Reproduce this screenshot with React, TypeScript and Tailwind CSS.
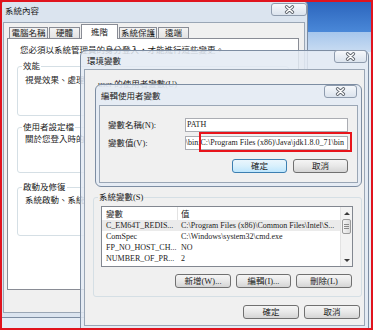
import React from "react";

const FONT = "font-['Liberation_Serif','Noto_Sans_CJK_TC',serif]";
const BTN =
  "flex items-center justify-center rounded-[3px] border border-[#707070] bg-linear-to-b from-[#f5f5f5] via-[#e8e8e8] to-[#d5d5d5] text-[#1b1b1b]";

function CloseBtn({ className = "" }: { className?: string }) {
  return (
    <div
      className={`flex items-center justify-center rounded-[3px] border border-[#8f9cae] bg-linear-to-b from-[#f6f8fb] to-[#dbe3ed] ${className}`}
    >
      <svg width="11" height="9" viewBox="0 0 11 9">
        <path d="M2.5 1.8 L8.5 7.2 M8.5 1.8 L2.5 7.2" stroke="#5f656d" strokeWidth="3.2" strokeLinecap="round" fill="none" />
        <path d="M2.5 1.8 L8.5 7.2 M8.5 1.8 L2.5 7.2" stroke="#ffffff" strokeWidth="1.5" strokeLinecap="round" fill="none" />
      </svg>
    </div>
  );
}

function GroupBox({
  label,
  labelBg,
  className = "",
  children,
}: {
  label: string;
  labelBg: string;
  className?: string;
  children?: React.ReactNode;
}) {
  return (
    <div className={`relative rounded-[3px] border border-[#d5dfe5] ${className}`}>
      <span className={`absolute -top-[6px] left-[4px] px-[1px] leading-[11px] ${labelBg}`}>{label}</span>
      {children}
    </div>
  );
}

function Tab({ label, w, active = false }: { label: string; w: string; active?: boolean }) {
  if (active) {
    return (
      <div
        className={`relative z-10 -mb-px flex h-[15px] items-center justify-center border border-b-0 border-[#898c95] bg-white ${w}`}
      >
        {label}
      </div>
    );
  }
  return (
    <div
      className={`flex h-[11px] items-center justify-center border border-b-0 border-[#898c95] bg-linear-to-b from-[#f3f3f3] to-[#e3e3e3] ${w}`}
    >
      {label}
    </div>
  );
}

function BackWindow() {
  return (
    <div className="absolute left-0 top-0 flex h-[318px] w-[308px] flex-col rounded-t-[6px] border border-[#7d8da2] bg-[#dbe4ef]">
      <div className="flex h-[21px] shrink-0 items-start justify-between pl-[4px]">
        <span className="mt-[5px] leading-[10px]">系統內容</span>
        <CloseBtn className="mt-[2px] h-[13px] w-[36px]" />
      </div>
      <div className="mx-[2px] mb-[4px] flex flex-1 flex-col border border-[#9aa6b5] bg-[#f0f0f0] pl-[3px] pr-[5px]">
        <div className="flex h-[15px] items-end gap-[1px] pl-[2px]">
          <Tab label="電腦名稱" w="w-[39px]" />
          <Tab label="硬體" w="w-[31px]" />
          <Tab label="進階" w="w-[37px]" active />
          <Tab label="系統保護" w="w-[38px]" />
          <Tab label="遠端" w="w-[31px]" />
        </div>
        <div className="flex h-[252px] flex-col border border-[#898c95] bg-white px-[9px]">
          <div className="ml-[3px] mt-[6px] h-[10px] whitespace-nowrap leading-[10px]">
            您必須以系統管理員的身分登入，才能進行這些變更。
          </div>
          <GroupBox label="效能" labelBg="bg-white" className="mt-[11px] h-[50px]">
            <div className="ml-[7px] mt-[8px] whitespace-nowrap leading-[10px]">視覺效果、處理器排程、記憶體使用及虛擬記憶體</div>
          </GroupBox>
          <GroupBox label="使用者設定檔" labelBg="bg-white" className="mt-[11px] h-[46px]">
            <div className="ml-[7px] mt-[6px] whitespace-nowrap leading-[10px]">關於您登入時的桌面設定</div>
          </GroupBox>
          <GroupBox label="啟動及修復" labelBg="bg-white" className="mt-[14px] h-[49px]">
            <div className="ml-[7px] mt-[7px] whitespace-nowrap leading-[10px]">系統啟動、系統失敗及偵錯資訊</div>
          </GroupBox>
        </div>
      </div>
    </div>
  );
}

const rows: [string, string][] = [
  ["C_EM64T_REDIS...", "C:\\Program Files (x86)\\Common Files\\Intel\\S..."],
  ["ComSpec", "C:\\Windows\\system32\\cmd.exe"],
  ["FP_NO_HOST_CH...", "NO"],
  ["NUMBER_OF_PR...", "2"],
  ["OS", "Windows_NT"],
];

function Scrollbar() {
  return (
    <div className="flex w-[12px] shrink-0 flex-col border-l border-[#e3e3e3] bg-[#f3f3f3]">
      <div className="flex h-[12px] items-center justify-center">
        <div className="h-0 w-0 border-x-[3px] border-b-[3px] border-x-transparent border-b-[#3b3b3b]" />
      </div>
      <div className="mx-[1px] flex h-[15px] flex-col items-center justify-center gap-[1px] rounded-[2px] border border-[#9b9b9b] bg-linear-to-r from-[#f4f4f4] to-[#dcdcdc]">
        <div className="h-px w-[5px] bg-[#8a8a8a]" />
        <div className="h-px w-[5px] bg-[#8a8a8a]" />
        <div className="h-px w-[5px] bg-[#8a8a8a]" />
      </div>
      <div className="flex-1" />
      <div className="flex h-[12px] items-center justify-center">
        <div className="h-0 w-0 border-x-[3px] border-t-[3px] border-x-transparent border-t-[#3b3b3b]" />
      </div>
    </div>
  );
}

function EnvWindow() {
  return (
    <div className="absolute left-[80px] top-[50px] flex h-[280px] w-[289px] flex-col rounded-t-[6px] border border-[#7d8da2] bg-[#e3eaf3]/85">
      <div className="flex h-[18px] shrink-0 items-start justify-between pl-[6px] pr-[1px]">
        <span className="mt-[5px] leading-[10px]">環境變數</span>
        <CloseBtn className="-mt-px h-[13px] w-[33px]" />
      </div>
      <div className="mx-[3px] mb-[3px] flex flex-1 flex-col border border-[#9aa6b5] bg-[#f0f0f0] pl-[8px] pr-[2px]">
        <div className="ml-[5px] mt-[9px] h-[10px] whitespace-nowrap leading-[10px]">user 的使用者變數(U)</div>
        <GroupBox label="系統變數(S)" labelBg="bg-[#f0f0f0]" className="mt-[108px] h-[100px]">
          <div className="ml-[7px] mt-[8px] flex h-[61px] w-[252px] overflow-hidden border border-[#828790] bg-white">
            <div className="min-w-0 flex-1 overflow-hidden">
              <div className="flex h-[13px] items-center whitespace-nowrap">
                <div className="flex h-full w-[76px] items-center border-r border-[#e3e3e3] pl-[4px]">變數</div>
                <div className="pl-[3px]">值</div>
              </div>
              {rows.map((r, i) => (
                <div
                  key={r[0]}
                  className={`flex h-[11px] items-center whitespace-nowrap text-[8px] ${i === 0 ? "bg-[#ebebeb]" : ""}`}
                >
                  <div className="w-[76px] shrink-0 overflow-hidden pl-[4px]">{r[0]}</div>
                  <div className="pl-[3px]">{r[1]}</div>
                </div>
              ))}
            </div>
            <Scrollbar />
          </div>
          <div className="mr-[9px] mt-[7px] flex justify-end gap-[5px]">
            <div className={`${BTN} h-[14px] w-[56px]`}>新增(W)...</div>
            <div className={`${BTN} h-[14px] w-[55px]`}>編輯(I)...</div>
            <div className={`${BTN} h-[14px] w-[56px]`}>刪除(L)</div>
          </div>
        </GroupBox>
        <div className="mr-[2px] mt-[8px] flex justify-end gap-[5px]">
          <div className={`${BTN} h-[14px] w-[56px]`}>確定</div>
          <div className={`${BTN} h-[14px] w-[56px]`}>取消</div>
        </div>
      </div>
    </div>
  );
}

function EditWindow() {
  return (
    <div className="absolute left-[95px] top-[84px] flex h-[103px] w-[267px] flex-col rounded-[6px] border border-[#7d8da2] bg-[#e4ebf4]/90">
      <div className="flex h-[20px] shrink-0 items-start justify-between pl-[5px] pr-[4px]">
        <span className="mt-[6px] leading-[10px]">編輯使用者變數</span>
        <CloseBtn className="h-[13px] w-[33px]" />
      </div>
      <div className="relative mx-[3px] mb-[3px] flex flex-1 flex-col border border-[#9aa6b5] bg-[#f0f0f0] pr-[9px] pt-[12px]">
        <div className="flex h-[14px] items-center">
          <div className="w-[85px] shrink-0 whitespace-nowrap pl-[8px]">變數名稱(N):</div>
          <div className="flex h-full flex-1 items-center border border-[#abadb3] bg-white pl-[1px] text-[8px]">PATH</div>
        </div>
        <div className="mt-[4px] flex h-[14px] items-center">
          <div className="w-[85px] shrink-0 whitespace-nowrap pl-[8px]">變數值(V):</div>
          <div className="flex h-full min-w-0 flex-1 items-center justify-end overflow-hidden whitespace-nowrap border border-[#abadb3] bg-white pr-[3px] text-[8px]">
            {".\\bin;C:\\Program Files (x86)\\Java\\jdk1.8.0_71\\bin"}
          </div>
        </div>
        <div className="mt-[9px] flex justify-end gap-[6px]">
          <div className="flex h-[14px] w-[55px] items-center justify-center rounded-[3px] border border-[#3c7fb1] bg-linear-to-b from-[#eaf6fd] via-[#d9f0fc] to-[#bee6fd]">
            確定
          </div>
          <div className={`${BTN} h-[14px] w-[55px]`}>取消</div>
        </div>
        <div className="pointer-events-none absolute left-[99px] top-[26px] h-[20px] w-[153px] border-2 border-[#e8141b]" />
      </div>
    </div>
  );
}

export default function App() {
  return (
    <div
      className={`relative h-[330px] w-[373px] overflow-hidden bg-[#e6edf5] text-[8.5px] leading-[10px] text-[#1b1b1b] ${FONT}`}
    >
      <div className="absolute right-0 top-0 flex w-[70px] flex-col">
        <div className="h-[32px] bg-linear-to-b from-[#2a63bb] to-[#4a88d8]" />
        <div className="h-[20px] bg-linear-to-b from-[#a6c6ec] to-[#c9dcf2]" />
      </div>
      <BackWindow />
      <EnvWindow />
      <EditWindow />
      <div className="pointer-events-none absolute inset-0 border-2 border-[#e0141e]" />
    </div>
  );
}
